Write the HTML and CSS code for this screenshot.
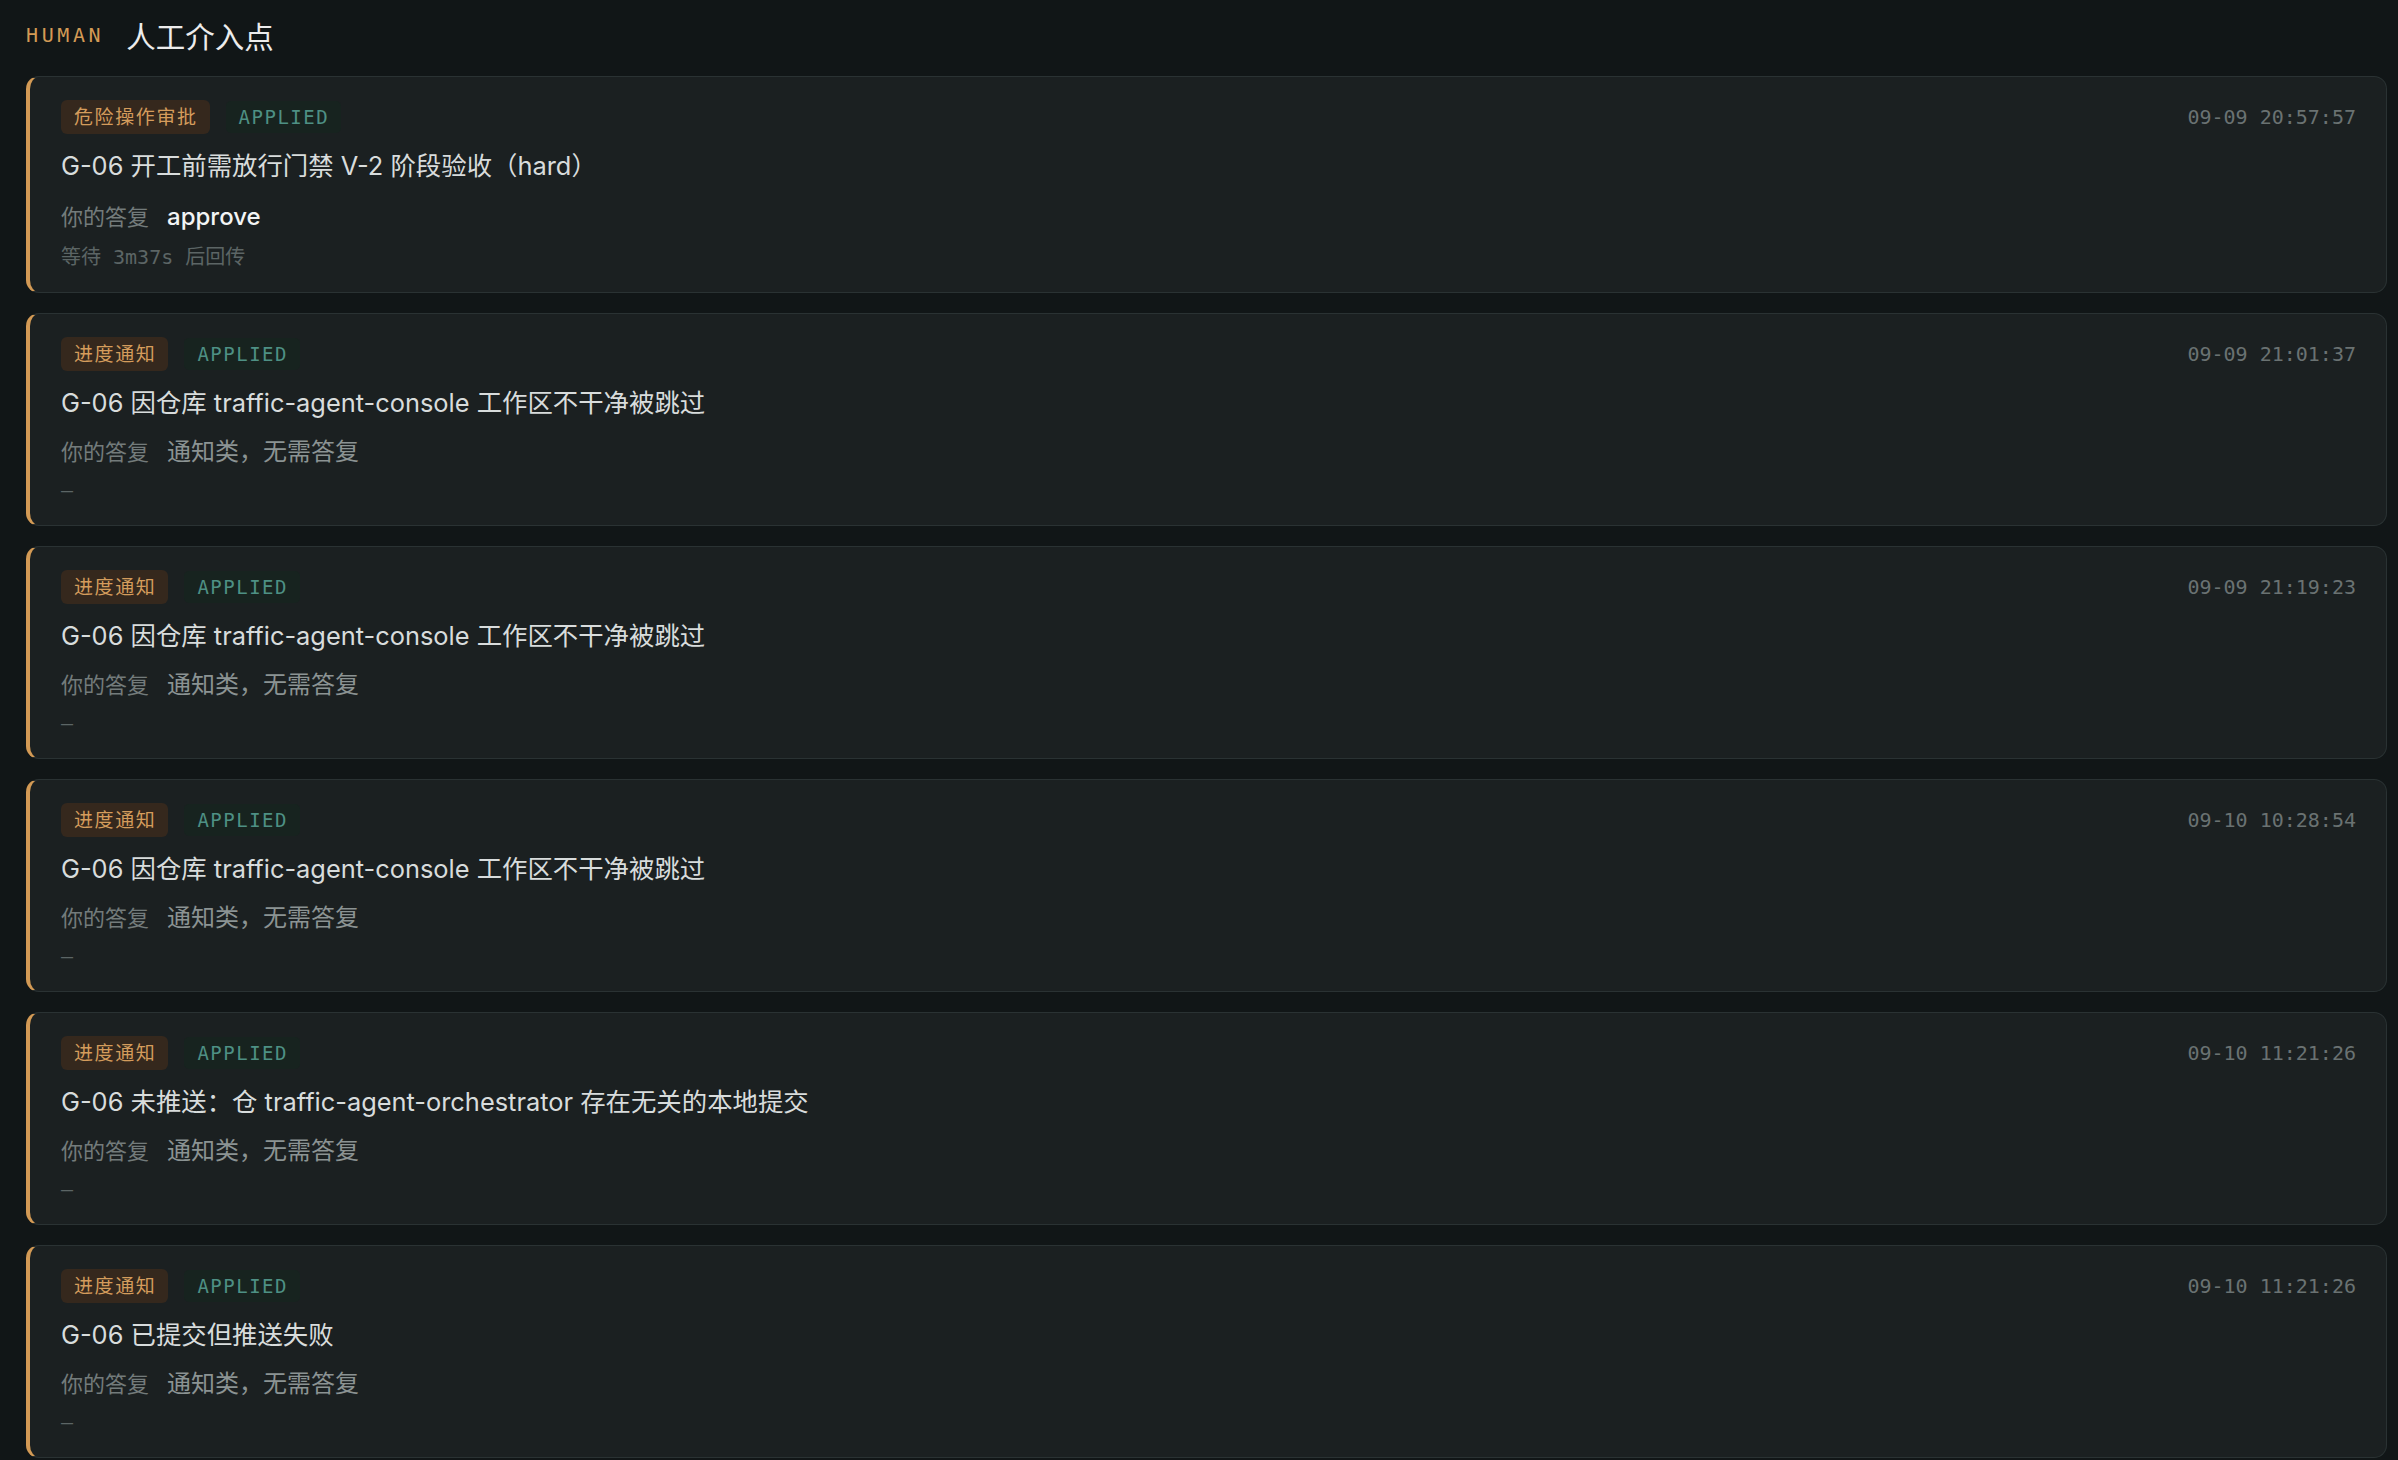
FILE: index.html
```html
<!DOCTYPE html>
<html lang="zh-CN">
<head>
<meta charset="utf-8">
<title>人工介入点</title>
<link rel="stylesheet" href="styles.css">
</head>
<body>
<main class="panel">
  <header class="panel-head">
    <span class="panel-tag">HUMAN</span>
    <h1 class="panel-title">人工介入点</h1>
  </header>

  <section class="list">
    <article class="item">
      <div class="item-head">
        <span class="kind">危险操作审批</span>
        <span class="state">APPLIED</span>
        <time class="stamp">09-09 20:57:57</time>
      </div>
      <p class="item-title">G-06 开工前需放行门禁 V-2 阶段验收（hard）</p>
      <p class="reply"><span class="reply-label">你的答复</span><span class="reply-val strong">approve</span></p>
      <p class="foot">等待 3m37s 后回传</p>
    </article>

    <article class="item">
      <div class="item-head">
        <span class="kind">进度通知</span>
        <span class="state">APPLIED</span>
        <time class="stamp">09-09 21:01:37</time>
      </div>
      <p class="item-title">G-06 因仓库 traffic-agent-console 工作区不干净被跳过</p>
      <p class="reply"><span class="reply-label">你的答复</span><span class="reply-val">通知类，无需答复</span></p>
      <p class="foot">–</p>
    </article>

    <article class="item">
      <div class="item-head">
        <span class="kind">进度通知</span>
        <span class="state">APPLIED</span>
        <time class="stamp">09-09 21:19:23</time>
      </div>
      <p class="item-title">G-06 因仓库 traffic-agent-console 工作区不干净被跳过</p>
      <p class="reply"><span class="reply-label">你的答复</span><span class="reply-val">通知类，无需答复</span></p>
      <p class="foot">–</p>
    </article>

    <article class="item">
      <div class="item-head">
        <span class="kind">进度通知</span>
        <span class="state">APPLIED</span>
        <time class="stamp">09-10 10:28:54</time>
      </div>
      <p class="item-title">G-06 因仓库 traffic-agent-console 工作区不干净被跳过</p>
      <p class="reply"><span class="reply-label">你的答复</span><span class="reply-val">通知类，无需答复</span></p>
      <p class="foot">–</p>
    </article>

    <article class="item">
      <div class="item-head">
        <span class="kind">进度通知</span>
        <span class="state">APPLIED</span>
        <time class="stamp">09-10 11:21:26</time>
      </div>
      <p class="item-title">G-06 未推送：仓 traffic-agent-orchestrator 存在无关的本地提交</p>
      <p class="reply"><span class="reply-label">你的答复</span><span class="reply-val">通知类，无需答复</span></p>
      <p class="foot">–</p>
    </article>

    <article class="item">
      <div class="item-head">
        <span class="kind">进度通知</span>
        <span class="state">APPLIED</span>
        <time class="stamp">09-10 11:21:26</time>
      </div>
      <p class="item-title">G-06 已提交但推送失败</p>
      <p class="reply"><span class="reply-label">你的答复</span><span class="reply-val">通知类，无需答复</span></p>
      <p class="foot">–</p>
    </article>
  </section>
</main>
</body>
</html>
```
FILE: styles.css
```css
html, body {
  margin: 0;
  padding: 0;
  background: #111617;
}

body {
  font-family: "Inter", "Noto Sans CJK SC", sans-serif;
  color: #d6dada;
  overflow: hidden;
}

.panel {
  padding: 13px 11px 0 26px;
}

/* section header */
.panel-head {
  display: flex;
  align-items: center;
  height: 44px;
  margin-bottom: 19px;
}

.panel-tag {
  font-family: "DejaVu Sans Mono", monospace;
  font-size: 20px;
  letter-spacing: 3.6px;
  color: #d39a55;
  margin-right: 22px;
}

.panel-title {
  margin: 0;
  font-family: "Noto Sans CJK SC", sans-serif;
  font-size: 29.5px;
  font-weight: 400;
  color: #ececec;
}

/* cards */
.list {
  display: flex;
  flex-direction: column;
  gap: 20px;
}

.item {
  background: #1b2021;
  border: 1px solid #2a3233;
  border-left: 4px solid #d39a55;
  border-radius: 13px;
  padding: 23px 30px 20px 31px;
}

.item-head {
  display: flex;
  align-items: center;
  height: 34px;
}

.kind {
  font-family: "DejaVu Sans Mono", "Noto Sans CJK SC", monospace;
  font-size: 19px;
  letter-spacing: 1.6px;
  line-height: 34px;
  padding: 0 12px 0 13px;
  border-radius: 6px;
  background: #35281d;
  color: #d49c5c;
}

.state {
  font-family: "DejaVu Sans Mono", monospace;
  font-size: 19px;
  letter-spacing: 1.5px;
  line-height: 32px;
  padding: 0 12px 0 13px;
  margin-left: 16px;
  border-radius: 5px;
  background: #17231f;
  color: #4e9084;
}

.stamp {
  margin-left: auto;
  font-family: "DejaVu Sans Mono", monospace;
  font-size: 20px;
  color: #6a7272;
}

.item-title {
  margin: 14px 0 0;
  font-size: 25.4px;
  line-height: 36px;
  color: #d8dcdc;
}

.reply {
  margin: 16px 0 0;
  line-height: 30px;
  display: flex;
  align-items: center;
}

.reply-label {
  font-size: 22px;
  color: #737b7b;
  margin-right: 18px;
}

.reply-val {
  font-size: 24px;
  color: #8b9393;
}

.reply-val.strong {
  line-height: 34px;
  font-weight: 500;
  color: #f2f4f4;
}

.foot {
  margin: 8px 0 0;
  font-family: "DejaVu Sans Mono", "Noto Sans CJK SC", monospace;
  font-size: 20px;
  line-height: 30px;
  color: #5c6565;
}
```
